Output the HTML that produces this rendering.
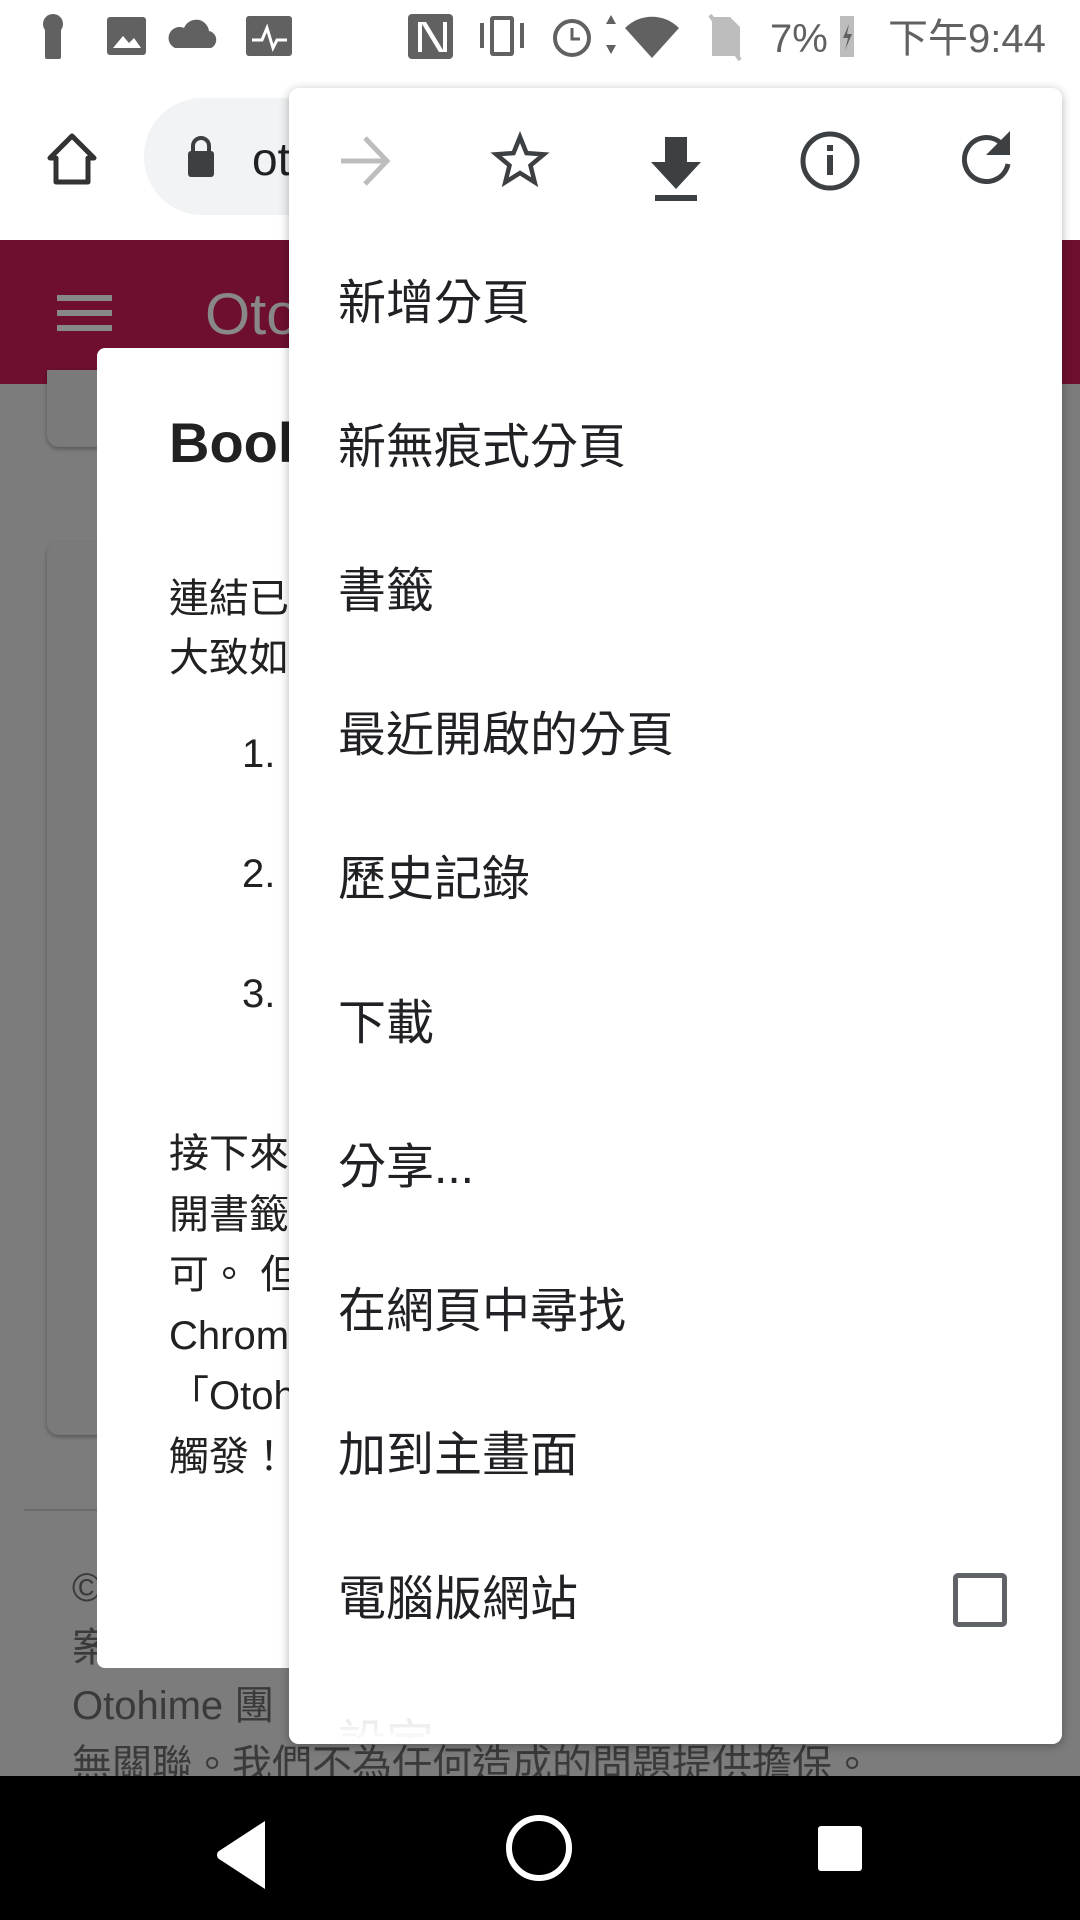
<!DOCTYPE html>
<html><head><meta charset="utf-8"><style>
*{margin:0;padding:0;box-sizing:border-box}
body{width:1080px;height:1920px;position:relative;overflow:hidden;background:#7c7c7c;font-family:"Liberation Sans","Noto Sans CJK TC",sans-serif}
.a{position:absolute}
.t{position:absolute;white-space:nowrap;line-height:1}
</style></head><body>
<div class="a" style="left:0;top:0;width:1080px;height:240px;background:#fff"></div>
<div class="a" style="left:0;top:240px;width:1080px;height:144px;background:#6f0f30"></div>
<svg class="a" style="left:0;top:0" width="1080" height="75" viewBox="0 0 1080 75">
<g fill="#616161">
<circle cx="53" cy="24" r="10"/><rect x="45" y="28" width="16" height="31" rx="2"/>
<rect x="107" y="17" width="39" height="38" rx="3"/>
<path d="M175 48h36a9 9 0 0 0-2-17a13 13 0 0 0-25-3a10 10 0 0 0-9 20z"/>
<rect x="246" y="16" width="46" height="40" rx="3"/>
<rect x="408" y="14" width="45" height="45" rx="4"/>
<rect x="490" y="16" width="24" height="40" rx="3"/><rect x="480" y="23" width="4" height="25"/><rect x="520" y="23" width="4" height="25"/>
<path d="M606 24l5 -9l5 9zM606 45l5 9l5 -9z"/>
<path d="M625 28a38 38 0 0 1 54 0l-27 30z"/>
<path d="M712 17h18l10 10v29h-28z" fill="#bdbdbd"/>
<rect x="840" y="16" width="14" height="41" fill="#bdbdbd"/>
</g>
<g fill="#fff"><path d="M113 48l10-12l6 7l5-5l7 10z"/><path d="M252 40h10l5-12l6 20l4-8h10" stroke="#fff" stroke-width="3" fill="none"/><path d="M418 22h8l17 28v-28h4v30h-8l-17-28v28h-4z" fill="#fff"/><rect x="494" y="20" width="16" height="32" fill="#fff"/></g>
<circle cx="572" cy="38" r="17" fill="none" stroke="#616161" stroke-width="4"/><path d="M572 28v11h8" stroke="#616161" stroke-width="3" fill="none"/>
<path d="M710 15l30 45" stroke="#bdbdbd" stroke-width="4"/>
<path d="M849 24l-6 14h5l-3 12l7-16h-5z" fill="#616161"/>
<text x="770" y="52" font-size="40" fill="#616161" font-family="Liberation Sans">7%</text>
<text x="888" y="52" font-size="40" fill="#616161" font-family="Liberation Sans,Noto Sans CJK TC">下午9:44</text>
</svg>
<svg class="a" style="top:132px;left:44px" width="56" height="56" viewBox="0 0 56 56"><path d="M28 4L6 26h6v24h32V26h6z" fill="none" stroke="#333" stroke-width="5" stroke-linejoin="round"/></svg>
<div class="a" style="left:144px;top:98px;width:200px;height:117px;border-radius:58px;background:#f1f3f4"></div>
<svg class="a" style="left:186px;top:134px" width="30" height="44" viewBox="0 0 30 44"><path d="M7 18v-6a8 8 0 0 1 16 0v6" fill="none" stroke="#3c4043" stroke-width="4"/><rect x="2" y="17" width="26" height="26" rx="3" fill="#3c4043"/></svg>
<div class="t" style="left:252px;top:136px;font-size:46px;color:#202124">ot</div>
<div class="a" style="left:57px;top:295px;width:55px;height:6px;background:#888"></div>
<div class="a" style="left:57px;top:310px;width:55px;height:6px;background:#888"></div>
<div class="a" style="left:57px;top:325px;width:55px;height:6px;background:#888"></div>
<div class="t" style="left:205px;top:286px;font-size:58px;color:#888">Oto</div>
<div class="a" style="left:47px;top:370px;width:300px;height:77px;border-radius:0 0 12px 12px;background:#7a7a7a;box-shadow:0 2px 4px rgba(0,0,0,.3)"></div>
<div class="a" style="left:47px;top:542px;width:300px;height:893px;border-radius:12px;background:#7a7a7a;box-shadow:0 2px 4px rgba(0,0,0,.3)"></div>
<div class="a" style="left:24px;top:1509px;width:300px;height:2px;background:#6a6a6a"></div>
<div class="t" style="left:72px;top:1568px;font-size:40px;color:#3a3a3a">©</div>
<div class="t" style="left:72px;top:1628px;font-size:40px;color:#3a3a3a">案</div>
<div class="t" style="left:72px;top:1686px;font-size:40px;color:#3a3a3a">Otohime 團</div>
<div class="t" style="left:72px;top:1745px;font-size:40px;color:#3a3a3a">無關聯。我們不為任何造成的問題提供擔保。</div>
<div class="a" style="left:97px;top:348px;width:400px;height:1320px;border-radius:8px;background:#fff"></div>
<div class="t" style="left:169px;top:415px;font-size:56px;font-weight:bold;color:#212121">Book</div>
<div class="a" style="left:169px;top:570px;font-size:40px;line-height:59px;color:#212121;white-space:nowrap">連結已<br>大致如</div>
<div class="t" style="left:242px;top:734px;font-size:40px;color:#212121">1.</div>
<div class="t" style="left:242px;top:854px;font-size:40px;color:#212121">2.</div>
<div class="t" style="left:242px;top:974px;font-size:40px;color:#212121">3.</div>
<div class="a" style="left:169px;top:1124px;font-size:40px;line-height:60.5px;color:#212121;white-space:nowrap">接下來<br>開書籤<br>可。 但<br>Chrom<br>「Otoh<br>觸發！</div>
<div class="a" style="left:0;top:1776px;width:1080px;height:144px;background:#000"></div>
<svg class="a" style="left:0;top:1776px" width="1080" height="144" viewBox="0 0 1080 144"><path d="M265 45v68l-46-30a5 5 0 0 1 0-8z" fill="#fff"/><circle cx="539" cy="72" r="30" fill="none" stroke="#fff" stroke-width="6"/><rect x="818" y="50" width="44" height="45" rx="3" fill="#fff"/></svg>
<div class="a" style="left:289px;top:88px;width:773px;height:1656px;border-radius:10px;background:#fff;box-shadow:0 2px 10px rgba(0,0,0,.3);overflow:hidden">
<svg class="a" style="left:0;top:0" width="773" height="150" viewBox="0 0 773 150">
<path d="M52 73h44M76 50l22 23l-22 23" fill="none" stroke="#bdbdbd" stroke-width="5"/>
<path d="M231 49L237.5 65.1L254.8 66.3L241.5 77.4L245.7 94.2L231 85L216.3 94.2L220.5 77.4L207.2 66.3L224.5 65.1Z" fill="none" stroke="#3c4043" stroke-width="4.5" stroke-linejoin="miter"/>
<path d="M376 49v25h-14l25 27l25-27h-14v-25z" fill="#3c4043"/><rect x="366" y="107" width="42" height="6" fill="#3c4043"/>
<circle cx="541" cy="73" r="27" fill="none" stroke="#3c4043" stroke-width="5"/><rect x="538" y="67" width="6" height="20" fill="#3c4043"/><rect x="538" y="57" width="6" height="6" fill="#3c4043"/>
<path d="M713 56a22 22 0 1 0 6 20" fill="none" stroke="#3c4043" stroke-width="5"/><path d="M697 67h24v-24z" fill="#3c4043"/>
</svg>
<div style="position:absolute;left:49px;top:144px;font-size:48px;line-height:144px;color:#202124;white-space:nowrap">新增分頁<br>新無痕式分頁<br>書籤<br>最近開啟的分頁<br>歷史記錄<br>下載<br>分享...<br>在網頁中尋找<br>加到主畫面<br>電腦版網站<br><span style="color:#ccc">設定</span></div>
<div class="a" style="left:664px;top:1485px;width:54px;height:54px;border:5px solid #5f6368;border-radius:5px"></div>
<div class="a" style="left:0;top:1620px;width:773px;height:36px;background:linear-gradient(rgba(255,255,255,.4),#fff)"></div>
</div>
</body></html>
